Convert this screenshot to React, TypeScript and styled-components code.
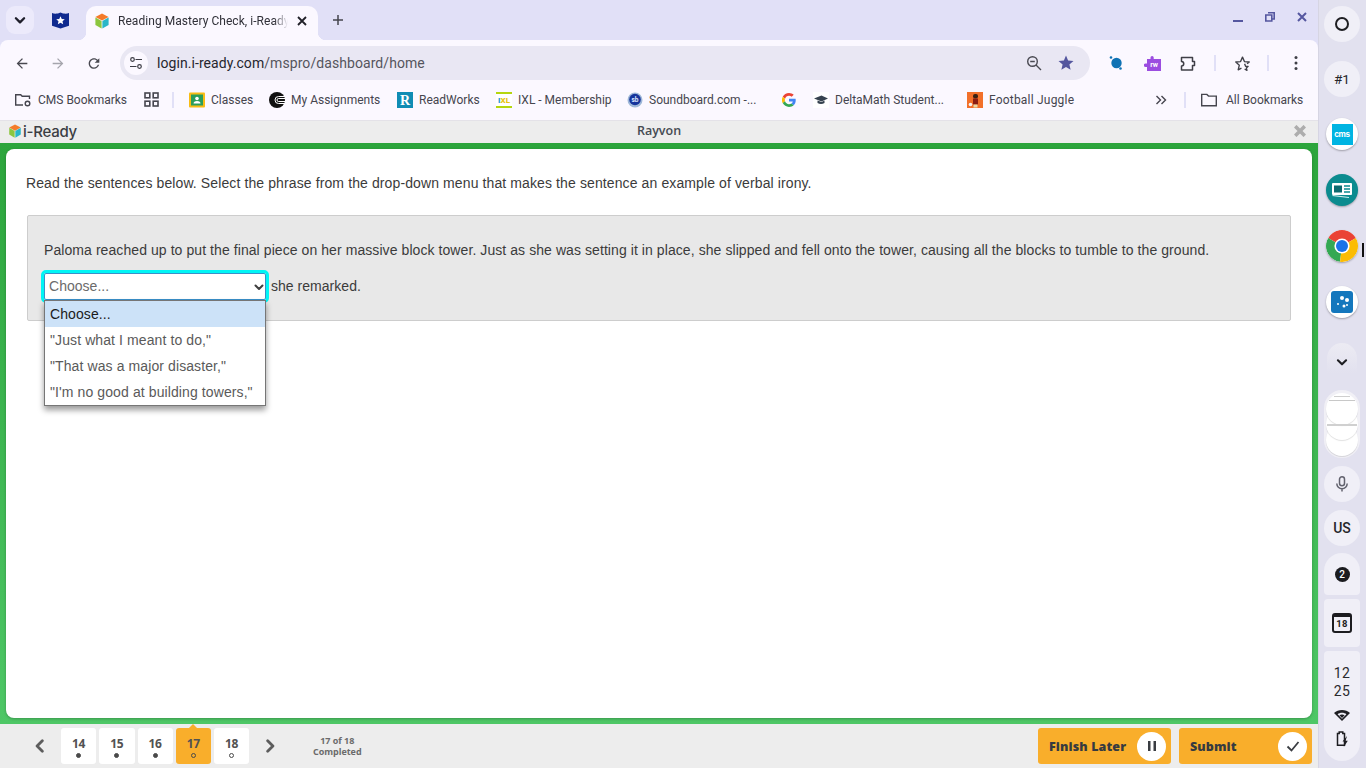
import React from "react";
import styled, { createGlobalStyle } from "styled-components";

const Global = createGlobalStyle`
  html, body { margin: 0; padding: 0; width: 1366px; height: 768px; overflow: hidden; background: #e2e1ef; }
  * { box-sizing: border-box; }
  body { font-family: Roboto, "Liberation Sans", sans-serif; }
`;

const Screen = styled.div`display: flex; width: 1366px; height: 768px;`;
const Browser = styled.div`width: 1318px; height: 768px; display: flex; flex-direction: column; background: #e1e0f7;`;
const TabStrip = styled.div`height: 40px; flex: none; display: flex; align-items: flex-start; padding: 6px 0 0 6px; position: relative;`;
const TabMenu = styled.div`width: 28px; height: 28px; border-radius: 9px; background: #eceafb; display: flex; align-items: center; justify-content: center; color: #1f1f2b;`;
const PinnedTab = styled.div`width: 52px; height: 28px; display: flex; align-items: center; justify-content: center;`;
const ActiveTab = styled.div`
  width: 232px; height: 34px; background: #fbf8ff; border-radius: 10px 10px 0 0; display: flex; align-items: center;
  padding: 0 0 4px 8px; position: relative;
  &::before, &::after { content: ""; position: absolute; bottom: 0; width: 8px; height: 8px; background: radial-gradient(circle at var(--c), transparent 8px, #fbf8ff 8.5px); }
  &::before { left: -8px; --c: 0 0; }
  &::after { right: -8px; --c: 100% 0; }
`;
const TabTitle = styled.span`
  margin-left: 8px; width: 176px; font-size: 12px; letter-spacing: 0.05px; color: #303038; white-space: nowrap; overflow: hidden;
  -webkit-mask-image: linear-gradient(to right, #000 156px, transparent 170px); mask-image: linear-gradient(to right, #000 156px, transparent 170px);
`;
const TabClose = styled.div`width: 16px; height: 16px; display: flex; align-items: center; justify-content: center; color: #202028;`;
const NewTab = styled.div`width: 16px; height: 28px; margin-left: 12px; display: flex; align-items: center; justify-content: center; color: #44444e;`;
const WindowControls = styled.div`margin-left: auto; height: 22px; display: flex; align-items: center; justify-content: flex-end; gap: 22px; padding: 0 11px 0 0; color: #5557a0;`;

const Toolbar = styled.div`height: 40px; flex: none; background: #fbf8ff; border-radius: 8px 8px 0 0; display: flex; align-items: flex-start; padding: 6px 0 0 14px;`;
const NavIcon = styled.div<{ $muted?: boolean }>`width: 16px; height: 34px; margin-right: 20px; display: flex; align-items: center; justify-content: center; color: ${p => (p.$muted ? "#a5a5ad" : "#484850")};`;
const Omnibox = styled.div`width: 970px; height: 34px; margin-left: -2px; background: #e9e7f3; border-radius: 17px; display: flex; align-items: center; padding: 0 15px 0 4px; flex: none;`;
const SiteChip = styled.div`width: 24px; height: 24px; border-radius: 50%; background: #fbf8ff; display: flex; align-items: center; justify-content: center; color: #3c3c44;`;
const Url = styled.span`margin-left: 9px; font-size: 14px; letter-spacing: 0.07px; color: #55555d;`;
const Host = styled.span`color: #26262e;`;
const OmniEnd = styled.div`margin-left: auto; display: flex; align-items: center; gap: 15px; color: #4a4a52;`;
const ToolRow = styled.div`flex: 1; display: flex; align-items: center; height: 34px; padding-left: 17px;`;
const ToolSlot = styled.div<{ $w: number; $ml?: number }>`width: ${p => p.$w}px; margin-left: ${p => p.$ml ?? 0}px; height: 20px; flex: none; display: flex; align-items: center; justify-content: center; color: #3f3f47;`;
const ToolSep = styled.div`width: 2px; height: 16px; background: #e1e0f7; flex: none;`;

const BookmarkBar = styled.div`height: 41px; flex: none; background: #fbf8ff; border-bottom: 1px solid #e4e2e8; display: flex; align-items: center; padding: 0 0 1px 14px;`;
const Bookmark = styled.div<{ $w: number; $track?: number }>`width: ${p => p.$w}px; flex: none; display: flex; align-items: center; gap: 6px; font-size: 12px; letter-spacing: ${p => p.$track ?? 0}px; color: #45454e; white-space: nowrap;`;
const BarSep = styled.div<{ $l: number; $r: number }>`width: 2px; height: 16px; background: #e1e0f7; margin: 0 ${p => p.$r}px 0 ${p => p.$l}px; flex: none;`;
const IconSlot = styled.span<{ $w?: number }>`width: ${p => p.$w ?? 16}px; height: 16px; flex: none; display: inline-flex; align-items: center; justify-content: center;`;
const FolderLabel = styled.span`margin-left: 2px;`;
const Spacer = styled.div`flex: 1;`;

const AppHeader = styled.div`height: 22px; flex: none; background: #ededed; display: flex; align-items: center; position: relative; padding: 0 12px 0 8px; color: #3c4149;`;
const Logo = styled.div`display: flex; align-items: center; gap: 1px; margin-top: -2px; font-family: Inter, Roboto, sans-serif; font-size: 15px; font-weight: 500; letter-spacing: -0.25px; color: #3b3e44;`;
const Student = styled.div`position: absolute; left: 0; right: 0; top: 0; height: 20px; line-height: 20px; text-align: center; font-family: "Open Sans", sans-serif; font-size: 12.5px; font-weight: 600; color: #454a52;`;
const HeaderClose = styled.div`margin-left: auto; color: #adadad; display: flex; margin-top: -2px;`;

const Frame = styled.div`height: 581px; flex: none; padding: 6px; background: linear-gradient(#2ca53c, #4ec766);`;
const Card = styled.div`height: 569px; background: #fff; border-radius: 8px; box-shadow: 0 1px 3px rgba(0,0,0,.25); padding: 26px 21px 0 20px; font-family: "Liberation Sans", Arial, sans-serif; font-size: 14px; color: #3b3b3b;`;
const Prompt = styled.p`margin: 0 0 23px; line-height: 17px; letter-spacing: 0.11px;`;
const QuestionBox = styled.div`height: 106px; margin-left: 1px; background: #e8e8e8; border: 1px solid #cdcdcd; border-radius: 2px; padding: 26px 16px 0;`;
const Passage = styled.p`margin: 0 0 14px; line-height: 17px; letter-spacing: 0.075px; white-space: nowrap;`;
const AnswerRow = styled.div`display: flex; align-items: center; gap: 5px; height: 27px; letter-spacing: 0.03px; padding-bottom: 1px;`;
const SelectBox = styled.div`
  position: relative; width: 222px; height: 27px; background: #fff; border: 1px solid #3a8fc9; outline: 3px solid #00f5f5; border-radius: 2px;
  display: flex; align-items: center; justify-content: space-between; padding: 0 0 1px 4px; color: #6b6b6b; font-size: 14px; flex: none; margin-bottom: -1px;
`;
const Caret = styled.span`color: #3f3f3f; display: flex; margin-top: 1px;`;
const DropList = styled.div`position: absolute; left: -1px; top: 26px; width: 222px; background: #fff; border: 1px solid #767676; box-shadow: 0 4px 6px rgba(0,0,0,.4); z-index: 3;`;
const DropOption = styled.div<{ $selected?: boolean }>`height: 26px; line-height: 26px; padding-left: 5px; font-size: 14px; letter-spacing: 0.1px; white-space: nowrap; color: ${p => (p.$selected ? "#1a1a1a" : "#5a5a5a")}; background: ${p => (p.$selected ? "#cce2f8" : "#fff")};`;

const BottomBar = styled.div`height: 44px; flex: none; background: #ededed; display: flex; align-items: center; padding: 0 6px 0 0; position: relative;`;
const PagerArrow = styled.div<{ $w: number; $pl?: number }>`width: ${p => p.$w}px; padding-left: ${p => p.$pl ?? 0}px; height: 36px; flex: none; display: flex; align-items: center; justify-content: center; color: #5d5d5d;`;
const Pager = styled.div`display: flex; gap: 3px;`;
const PageTile = styled.div<{ $active?: boolean }>`
  width: 35.25px; height: 36px; border-radius: 3px; background: ${p => (p.$active ? "#f9ae2b" : "#fff")}; position: relative; display: flex; flex-direction: column; align-items: center; padding-top: 7px;
  font-family: "Open Sans", Roboto, sans-serif; font-size: 12px; line-height: 17px; font-weight: 700; color: #525252; letter-spacing: -0.2px;
  ${p => p.$active ? `&::before { content: ""; position: absolute; top: -4px; left: 13px; border-left: 4.5px solid transparent; border-right: 4.5px solid transparent; border-bottom: 4px solid #f9ae2b; }` : ""}
`;
const Dot = styled.span<{ $open?: boolean }>`width: 5px; height: 5px; margin-top: 1px; border-radius: 50%; background: ${p => (p.$open ? "transparent" : "#4a4a4a")}; border: 1px solid #4a4a4a;`;
const Progress = styled.div`width: 92px; flex: none; text-align: center; font-family: "Open Sans", sans-serif; font-size: 9px; line-height: 11px; font-weight: 700; letter-spacing: -0.02px; color: #6b6b6b;`;
const ActionButton = styled.div`width: 133px; height: 36px; flex: none; background: #f9ae2b; border-radius: 3px; display: flex; align-items: center; justify-content: space-between; padding: 0 5px 0 11px; font-family: "Open Sans", sans-serif; font-weight: 800; font-size: 12.5px; letter-spacing: 0.12px; color: #363a40;`;
const ActionCircle = styled.span`width: 29px; height: 29px; border-radius: 50%; background: #fff; display: flex; align-items: center; justify-content: center; color: #3a3d42;`;
const ActionGroup = styled.div`margin-left: auto; display: flex; gap: 8px;`;

const Shelf = styled.div`width: 48px; height: 768px; flex: none; background: #e2e1ef; border-left: 1px solid #d6d5e3; display: flex; flex-direction: column; align-items: center; padding: 6px 1px 0 0; position: relative; font-size: 13px; color: #1e1e22;`;
const Pod = styled.div<{ $h?: number; $mt: number; $r?: string }>`width: 36px; height: ${p => p.$h ?? 36}px; margin-top: ${p => p.$mt}px; flex: none; background: #f0eff7; border-radius: ${p => p.$r ?? "18px"}; display: flex; flex-direction: column; align-items: center; justify-content: center;`;
const ClockPod = styled(Pod)`justify-content: flex-start; padding-top: 13px;`;
const AppIcon = styled.div<{ $mt: number; $bg?: string }>`width: 32px; height: 32px; margin-top: ${p => p.$mt}px; flex: none; border-radius: 50%; background: ${p => p.$bg ?? "#fff"}; box-shadow: 0 1px 2px rgba(0,0,0,.3); display: flex; align-items: center; justify-content: center; overflow: hidden;`;
const Expand = styled.div`width: 30px; height: 30px; margin-top: 25px; border-radius: 15px 15px 0 0; background: linear-gradient(#ecebf3, #e2e1ef); flex: none; display: flex; align-items: center; justify-content: center; padding-top: 7px;`;
const Stack = styled.div`width: 36px; height: 68px; margin-top: 17px; flex: none; border-radius: 18px; background: #f1f0f6; position: relative; overflow: hidden;`;
const StackDisc = styled.div<{ $t: number }>`position: absolute; left: 2px; top: ${p => p.$t}px; width: 32px; height: 32px; border-radius: 50%; background: #fff; box-shadow: 0 1px 1px rgba(0,0,0,.12);`;
const Thumb = styled.div`position: absolute; left: 2px; right: 2px; top: 3px; height: 34px;
  background: linear-gradient(#cfcfcf, #cfcfcf) 50% 3px / 16px 1px no-repeat, linear-gradient(#c8c8c8, #c8c8c8) 50% 7px / 26px 1px no-repeat, linear-gradient(#d0d0d0, #d0d0d0) 50% 31px / 30px 2px no-repeat;`;
const CmsMark = styled.div`width: 21px; height: 21px; background: #00b4e2; color: #fff; font: 700 8px/21px Inter, sans-serif; text-align: center; letter-spacing: -0.3px;`;
const BarCaretBlack = styled.div`position: absolute; left: 43px; top: 243px; width: 2px; height: 14px; background: #111;`;
const Badge = styled.span`width: 15px; height: 15px; border-radius: 50%; background: #1b1b1f; color: #fff; font-size: 10px; font-weight: 500; display: flex; align-items: center; justify-content: center;`;
const Clock = styled.span`font-size: 14px; line-height: 18px; letter-spacing: 0.3px; color: #2a2a2e;`;
const WifiIcon = styled.svg`margin-top: 10px; flex: none;`;
const BatteryIcon = styled.svg`margin-top: 10px; flex: none;`;
const UsLabel = styled.span`font-size: 14px; font-weight: 500; color: #26262a;`;
const NumLabel = styled.span`font-size: 13.5px; color: #26262a;`;
const CalNum = styled.span`width: 20px; height: 20px; border: 2px solid #1c1c20; border-top-width: 4px; border-radius: 3px; font-size: 9.5px; font-weight: 700; line-height: 13px; text-align: center; letter-spacing: 0.3px; color: #1c1c20;`;

const P = ({ d, s = 20, f = "currentColor" }: { d: string; s?: number; f?: string }) => (
  <svg width={s} height={s} viewBox="0 0 24 24" fill={f}><path d={d} /></svg>
);
const Cube = ({ s = 16 }: { s?: number }) => (
  <svg width={s} height={s} viewBox="0 0 16 16">
    <path d="M8 .5 14.6 4 8 7.6 1.4 4z" fill="#f47b2a" />
    <path d="M1.4 4.4 7.6 8v7.6L1.4 12z" fill="#8cc63f" />
    <path d="M14.6 4.4 8.4 8v7.6l6.2-3.6z" fill="#29b6c8" />
  </svg>
);
const Chevron = ({ dir, s = 12, w = 2 }: { dir: "l" | "r" | "d"; s?: number; w?: number }) => (
  <svg width={s} height={s} viewBox="0 0 12 12" fill="none" stroke="currentColor" strokeWidth={w} strokeLinecap="round" strokeLinejoin="round">
    <path d={dir === "d" ? "M2.5 4.5 6 8l3.5-3.5" : dir === "l" ? "M8 1.5 3.5 6 8 10.5" : "M4 1.5 8.5 6 4 10.5"} />
  </svg>
);
const Cross = ({ s = 10, w = 1.8 }: { s?: number; w?: number }) => (
  <svg width={s} height={s} viewBox="0 0 10 10" stroke="currentColor" strokeWidth={w} fill="none"><path d="M1 1l8 8M9 1l-8 8" /></svg>
);
const ChromeLogo = () => (
  <svg width="34" height="34" viewBox="0 0 32 32">
    <path d="M16 16 2.1 8A16 16 0 0 1 30 8z" fill="#ea4335" />
    <path d="M16 32A16 16 0 0 1 2.1 8L16 16l-2 16z" fill="#34a853" />
    <path d="M30 8A16 16 0 0 1 16 32l-2 0 2-16z" fill="#fbbc04" />
    <circle cx="16" cy="16" r="7.6" fill="#fff" /><circle cx="16" cy="16" r="6" fill="#1a73e8" />
  </svg>
);

export default function App() {
  return (
    <Screen>
      <Global />
      <Browser>
        <TabStrip>
          <TabMenu><Chevron dir="d" s={14} /></TabMenu>
          <PinnedTab>
            <svg width="17" height="17" viewBox="0 0 16 16"><path d="M0 1c2 .8 5 1 8-.5 3 1.5 6 1.3 8 .5v12l-8 2.500L0 13z" fill="#0f2a8f" /><path d="m8 4 1.2 2.6 2.8.3-2.1 1.9.6 2.8L8 10.2l-2.5 1.4.6-2.8L4 6.9l2.8-.3z" fill="#fff" /></svg>
          </PinnedTab>
          <ActiveTab>
            <Cube />
            <TabTitle>Reading Mastery Check, i-Ready</TabTitle>
            <TabClose><Cross /></TabClose>
          </ActiveTab>
          <NewTab>
            <svg width="12" height="12" viewBox="0 0 12 12" stroke="currentColor" strokeWidth="1.5"><path d="M6 1v10M1 6h10" /></svg>
          </NewTab>
          <WindowControls>
            <svg width="10" height="10" viewBox="0 0 10 10"><path d="M0 8h10v2H0z" fill="currentColor" /></svg>
            <svg width="10" height="10" viewBox="0 0 10 10" fill="none" stroke="currentColor" strokeWidth="1.6"><path d="M3 .8h6.2V7H7" /><path d="M.8 3h6v6h-6z" /></svg>
            <Cross s={10} w={2} />
          </WindowControls>
        </TabStrip>
        <Toolbar>
          <NavIcon><P s={17} d="M20 11H7.83l5.59-5.59L12 4l-8 8 8 8 1.41-1.41L7.83 13H20v-2z" /></NavIcon>
          <NavIcon $muted><P s={17} d="M4 13h12.17l-5.59 5.59L12 20l8-8-8-8-1.41 1.41L16.17 11H4v2z" /></NavIcon>
          <NavIcon><P s={17} d="M17.65 6.35C16.2 4.9 14.21 4 12 4c-4.42 0-7.99 3.58-7.99 8s3.57 8 7.99 8c3.73 0 6.84-2.55 7.73-6h-2.08c-.82 2.33-3.04 4-5.65 4-3.31 0-6-2.69-6-6s2.69-6 6-6c1.66 0 3.14.69 4.22 1.78L13 11h7V4l-2.35 2.35z" /></NavIcon>
          <Omnibox>
            <SiteChip>
              <svg width="14" height="14" viewBox="0 0 14 14" fill="none" stroke="currentColor" strokeWidth="1.2"><circle cx="3.5" cy="3.5" r="1.8" /><path d="M6.5 3.5H13M1 10.5h6.5" /><circle cx="10.5" cy="10.5" r="1.8" /></svg>
            </SiteChip>
            <Url><Host>login.i-ready.com</Host>/mspro/dashboard/home</Url>
            <OmniEnd>
              <svg width="16" height="16" viewBox="0 0 16 16" fill="none" stroke="currentColor" strokeWidth="1.4"><circle cx="6.5" cy="6.5" r="4.8" /><path d="M10 10l5 5M4.2 6.5h4.6" /></svg>
              <svg width="18" height="18" viewBox="0 0 24 24" fill="#54569e"><path d="M12 17.27 18.18 21l-1.64-7.03L22 9.24l-7.19-.61L12 2 9.19 8.63 2 9.24l5.46 4.73L5.82 21z" /></svg>
            </OmniEnd>
          </Omnibox>
          <ToolRow>
            <ToolSlot $w={18}>
              <svg width="16" height="16" viewBox="0 0 16 16"><circle cx="8.5" cy="8" r="5.2" fill="#0f72b4" /><circle cx="3" cy="2.5" r="1.3" fill="#0f72b4" /><circle cx="12.5" cy="13.5" r="1.3" fill="#0f72b4" /></svg>
            </ToolSlot>
            <ToolSlot $w={18} $ml={18}>
              <svg width="17" height="16" viewBox="0 0 17 16"><path d="M3 4h3.5V2.600a1.600 1.600 0 0 1 3.200 0V4H17v12H3v-4H1.600a1.800 1.800 0 0 1 0-3.600H3z" fill="#9b4de0" /><text x="6.200" y="12" fontFamily="Roboto" fontSize="7" fontWeight="700" fill="#fff">rw</text></svg>
            </ToolSlot>
            <ToolSlot $w={18} $ml={18}>
              <svg width="17" height="17" viewBox="0 0 17 17" fill="none" stroke="currentColor" strokeWidth="1.5"><path d="M1.500 2.500h11v4h2v4h-2v4.500h-11v-4a2 2 0 0 0 0-4.500z" strokeLinejoin="round" /></svg>
            </ToolSlot>
            <ToolSlot $w={16} $ml={10}><ToolSep /></ToolSlot>
            <ToolSlot $w={18} $ml={10}>
              <svg width="17" height="17" viewBox="0 0 24 24" fill="none" stroke="currentColor" strokeWidth="1.9" strokeLinejoin="round"><path d="M10.500 18.500 5.900 20.900l1.600-6.500L2.500 9.900l6.800-.6L12 3l2.700 6.300 6.800.6-3 2.600" /><path d="M15 12.500l1.300 3.500L20 16l-2.500 2.300.8 3.500-3.300-2" /></svg>
            </ToolSlot>
            <ToolSlot $w={16} $ml={9}><ToolSep /></ToolSlot>
            <ToolSlot $w={18} $ml={11}>
              <svg width="16" height="16" viewBox="0 0 16 16" fill="currentColor"><circle cx="8" cy="2.500" r="1.500" /><circle cx="8" cy="8" r="1.500" /><circle cx="8" cy="13.500" r="1.500" /></svg>
            </ToolSlot>
          </ToolRow>
        </Toolbar>
        <BookmarkBar>
          <Bookmark $w={129}>
            <IconSlot $w={18}><svg width="18" height="16" viewBox="0 0 18 16" fill="none" stroke="#45454e" strokeWidth="1.4"><path d="M9 13H1.700V2.700h5l1.500 1.600h7.300V7" /><circle cx="13.500" cy="11.500" r="2.300" /></svg></IconSlot>
            CMS Bookmarks
          </Bookmark>
          <Bookmark $w={29}>
            <IconSlot><svg width="15" height="15" viewBox="0 0 15 15" fill="none" stroke="#45454e" strokeWidth="1.600"><rect x="1" y="1" width="4.800" height="4.800" /><rect x="9.200" y="1" width="4.800" height="4.800" /><rect x="1" y="9.200" width="4.800" height="4.800" /><rect x="9.200" y="9.200" width="4.800" height="4.800" /></svg></IconSlot>
          </Bookmark>
          <BarSep $l={0} $r={15} />
          <Bookmark $w={80}>
            <IconSlot><svg width="16" height="16" viewBox="0 0 16 16"><rect width="16" height="15" y=".5" rx="1" fill="#f8bc14" /><rect x="2" y="2.500" width="12" height="11" fill="#2a9d5c" /><circle cx="8" cy="6.500" r="1.800" fill="#fff" /><path d="M4.500 11.500a3.500 2.500 0 0 1 7 0z" fill="#fff" /></svg></IconSlot>
            Classes
          </Bookmark>
          <Bookmark $w={128}>
            <IconSlot><svg width="16" height="16" viewBox="0 0 16 16"><circle cx="8" cy="8" r="8" fill="#111" /><path d="M16 4.500H9.500a3.500 3.500 0 0 0 0 7H16M16 6.500H9.500a1.500 1.500 0 0 0 0 3H16" stroke="#fff" strokeWidth="1" fill="none" /></svg></IconSlot>
            My Assignments
          </Bookmark>
          <Bookmark $w={99}>
            <IconSlot><svg width="16" height="16" viewBox="0 0 16 16"><rect width="16" height="16" fill="#0f8cb4" /><text x="8" y="13" textAnchor="middle" fontFamily="Liberation Serif" fontWeight="700" fontSize="14" fill="#fff">R</text></svg></IconSlot>
            ReadWorks
          </Bookmark>
          <Bookmark $w={131}>
            <IconSlot><svg width="16" height="16" viewBox="0 0 16 16"><rect width="16" height="16" fill="#fff" /><path d="M0 1h16M0 15h16" stroke="#b5d60e" strokeWidth="2" /><text x="8" y="11" textAnchor="middle" fontFamily="Roboto" fontWeight="900" fontSize="8" fill="#e9c411"><tspan fill="#1f9ad6">I</tspan>XL</text></svg></IconSlot>
            IXL - Membership
          </Bookmark>
          <Bookmark $w={154}>
            <IconSlot><svg width="16" height="16" viewBox="0 0 16 16"><circle cx="8" cy="8" r="7.500" fill="#9fb8d8" /><circle cx="8" cy="7.500" r="5.800" fill="#16349c" /><text x="8" y="10" textAnchor="middle" fontFamily="Roboto" fontWeight="700" fontSize="6.500" fill="#dfe9ff">sb</text></svg></IconSlot>
            Soundboard.com -...
          </Bookmark>
          <Bookmark $w={32}>
            <IconSlot><svg width="14" height="14" viewBox="0 0 48 48"><path fill="#EA4335" d="M24 9.500c3.500 0 6.700 1.200 9.200 3.600l6.900-6.900C35.900 2.400 30.500 0 24 0 14.600 0 6.500 5.400 2.600 13.200l8 6.200C12.400 13.700 17.700 9.500 24 9.500z" /><path fill="#4285F4" d="M47 24.500c0-1.600-.1-3.100-.4-4.500H24v9h13c-.6 3-2.200 5.500-4.700 7.200l7.700 6C44.500 37.900 47 31.800 47 24.500z" /><path fill="#FBBC05" d="M10.500 28.600A14.400 14.400 0 0 1 10.500 19.400l-8-6.200a24 24 0 0 0 0 21.600z" /><path fill="#34A853" d="M24 48c6.500 0 11.900-2.100 15.900-5.800l-7.700-6c-2.200 1.500-4.900 2.300-8.200 2.300-6.300 0-11.600-4.200-13.500-10l-8 6.200C6.500 42.600 14.600 48 24 48z" /></svg></IconSlot>
          </Bookmark>
          <Bookmark $w={154}>
            <IconSlot><svg width="16" height="16" viewBox="0 0 16 16"><rect width="16" height="16" fill="#fff" /><path d="M1 6.500 8.500 3.500 15 6.500l-6.500 3z" fill="#36424f" /><path d="M4.500 8.500v2.500c2 1.300 5 1.300 7 0V8.500l-3 1.500z" fill="#36424f" /></svg></IconSlot>
            DeltaMath Student...
          </Bookmark>
          <Bookmark $w={120} $track={0.2}>
            <IconSlot><svg width="16" height="16" viewBox="0 0 16 16"><rect width="16" height="16" fill="#f2702a" /><rect x="6" y="2" width="5" height="4.500" rx="2" fill="#3a2214" /><rect x="6" y="6.500" width="5" height="6" fill="#8a1d12" /><rect x="6.500" y="12.500" width="4" height="3" fill="#e8d9a5" /><circle cx="3.500" cy="12.500" r="1.800" fill="#f3f3f3" /></svg></IconSlot>
            Football Juggle
          </Bookmark>
          <Spacer />
          <IconSlot $w={12}><svg width="12" height="12" viewBox="0 0 12 12" fill="none" stroke="#45454e" strokeWidth="1.400"><path d="M1.500 2l4 4-4 4M6.500 2l4 4-4 4" /></svg></IconSlot>
          <BarSep $l={17} $r={14} />
          <Bookmark $w={118}>
            <IconSlot $w={18}><svg width="18" height="16" viewBox="0 0 18 16" fill="none" stroke="#45454e" strokeWidth="1.400"><path d="M1.700 13.800V2.400h5.200l1.600 1.700h7.800v9.700z" /></svg></IconSlot>
            <FolderLabel>All Bookmarks</FolderLabel>
          </Bookmark>
        </BookmarkBar>
        <AppHeader>
          <Logo><Cube s={14} />i-Ready</Logo>
          <Student>Rayvon</Student>
          <HeaderClose><Cross s={12} w={3} /></HeaderClose>
        </AppHeader>
        <Frame>
          <Card>
            <Prompt>Read the sentences below. Select the phrase from the drop-down menu that makes the sentence an example of verbal irony.</Prompt>
            <QuestionBox>
              <Passage>Paloma reached up to put the final piece on her massive block tower. Just as she was setting it in place, she slipped and fell onto the tower, causing all the blocks to tumble to the ground.</Passage>
              <AnswerRow>
                <SelectBox>
                  Choose...
                  <Caret><Chevron dir="d" s={12} w={2} /></Caret>
                  <DropList>
                    <DropOption $selected>Choose...</DropOption>
                    <DropOption>"Just what I meant to do,"</DropOption>
                    <DropOption>"That was a major disaster,"</DropOption>
                    <DropOption>"I'm no good at building towers,"</DropOption>
                  </DropList>
                </SelectBox>
                she remarked.
              </AnswerRow>
            </QuestionBox>
          </Card>
        </Frame>
        <BottomBar>
          <PagerArrow $w={61} $pl={18}><Chevron dir="l" s={14} w={2.400} /></PagerArrow>
          <Pager>
            <PageTile>14<Dot /></PageTile>
            <PageTile>15<Dot /></PageTile>
            <PageTile>16<Dot /></PageTile>
            <PageTile $active>17<Dot $open /></PageTile>
            <PageTile>18<Dot $open /></PageTile>
          </Pager>
          <PagerArrow $w={42}><Chevron dir="r" s={14} w={2.400} /></PagerArrow>
          <Progress>17 of 18<br />Completed</Progress>
          <ActionGroup>
            <ActionButton>
              Finish Later
              <ActionCircle><svg width="12" height="12" viewBox="0 0 12 12" fill="currentColor"><rect x="2" y="1" width="2.500" height="10" /><rect x="7.500" y="1" width="2.500" height="10" /></svg></ActionCircle>
            </ActionButton>
            <ActionButton>
              Submit
              <ActionCircle><svg width="14" height="14" viewBox="0 0 14 14" fill="none" stroke="currentColor" strokeWidth="1.800"><path d="M1.500 7.500 5.500 11.500 12.500 3" /></svg></ActionCircle>
            </ActionButton>
          </ActionGroup>
        </BottomBar>
      </Browser>
      <Shelf>
        <Pod $mt={0}>
          <svg width="16" height="16" viewBox="0 0 16 16" fill="none" stroke="#1e1e22" strokeWidth="2"><circle cx="8" cy="8" r="6" /></svg>
        </Pod>
        <Pod $mt={19}><NumLabel>#1</NumLabel></Pod>
        <AppIcon $mt={21}><CmsMark>cms</CmsMark></AppIcon>
        <AppIcon $mt={24} $bg="#0b8b8f">
          <svg width="22" height="18" viewBox="0 0 22 18"><rect x="1" y="2" width="20" height="12" rx="1" fill="#fff" /><rect x="3" y="4.500" width="8" height="7" fill="#0b6b70" /><path d="M13 5h6M13 8h6M13 11h6" stroke="#0b8b8f" strokeWidth="1.500" /><path d="M2 14l16 2v1L1 15z" fill="#cfeeee" /></svg>
        </AppIcon>
        <AppIcon $mt={24}><ChromeLogo /></AppIcon>
        <AppIcon $mt={24}>
          <svg width="22" height="22" viewBox="0 0 22 22"><rect width="22" height="22" rx="3" fill="#1477bd" /><circle cx="11" cy="7" r="2" fill="#fff" /><circle cx="16" cy="9" r="2" fill="#fff" /><circle cx="7" cy="13" r="1" fill="#fff" /><circle cx="13" cy="15" r="1.500" fill="#fff" /><circle cx="16" cy="14" r="1" fill="#fff" /></svg>
        </AppIcon>
        <Expand><Chevron dir="d" s={14} w={1.800} /></Expand>
        <Stack>
          <StackDisc $t={34} /><StackDisc $t={18} /><StackDisc $t={3} />
          <Thumb />
        </Stack>
        <Pod $mt={8}>
          <svg width="18" height="18" viewBox="0 0 18 18" fill="none" stroke="#62626e" strokeWidth="1.500"><rect x="6.500" y="1.800" width="5" height="9" rx="2.500" /><path d="M3.800 8.500a5.200 5.200 0 0 0 10.400 0M9 13.700v2.800" /></svg>
        </Pod>
        <Pod $mt={8}><UsLabel>US</UsLabel></Pod>
        <Pod $mt={7} $h={42} $r="18px 18px 4px 4px"><Badge>2</Badge></Pod>
        <Pod $mt={4} $h={48} $r="4px"><CalNum>18</CalNum></Pod>
        <ClockPod $mt={4} $h={110} $r="4px 4px 18px 18px">
          <Clock>12</Clock><Clock>25</Clock>
          <WifiIcon width="16" height="11" viewBox="0 0 16 11"><path d="M8 11 0 3C2 1.100 5 0 8 0s6 1.100 8 3z" fill="#1e1e22" /><path d="M3.600 4.300C4.800 3.300 6.300 2.800 8 2.800s3.200.5 4.400 1.500L8 8.800z" fill="#f0eff7" /><path d="M5.400 5.200C6.100 4.800 7 4.500 8 4.500s1.900.3 2.600.7L8 8z" fill="#1e1e22" /></WifiIcon>
          <BatteryIcon width="12" height="16" viewBox="0 0 12 16"><path d="M3.200 1h3.600v1.500H8.500v11.700H1.500V2.500h1.700z" fill="none" stroke="#1e1e22" strokeWidth="1.500" /><path d="M11 5 6.500 10.500h2.300L7.800 16l4-6.300H9.600z" fill="#1e1e22" /></BatteryIcon>
        </ClockPod>
        <BarCaretBlack />
      </Shelf>
    </Screen>
  );
}
